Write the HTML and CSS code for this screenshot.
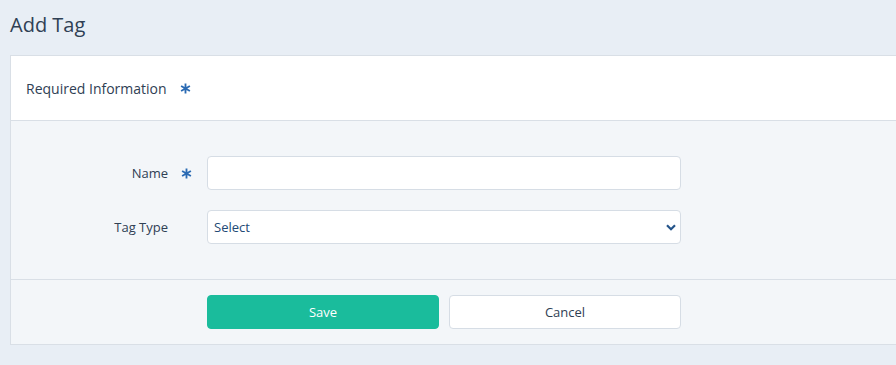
FILE: index.html
```html
<!DOCTYPE html>
<html>
<head>
	<meta charset="utf-8">
	<meta name="viewport" content="width=device-width, initial-scale=1">
	<title>Add Tag</title>
	<link rel="stylesheet" href="styles.css">
</head>
<body>

  <div class="page">
    <h1 class="page_title">Add Tag</h1>

    <div class="panel">
      <div class="panel_head">
        Required Information
        <span class="req">
          <svg width="11" height="11" viewBox="0 0 12 12"><path d="M6 0.5V11.5M1.2 3.2L10.8 8.8M10.8 3.2L1.2 8.8" stroke="currentColor" stroke-width="2"/></svg>
        </span>
      </div>

      <div class="panel_body">
        <div class="form_row">
          <label class="form_label" for="tagName">Name</label>
          <span class="req">
            <svg width="11" height="11" viewBox="0 0 12 12"><path d="M6 0.5V11.5M1.2 3.2L10.8 8.8M10.8 3.2L1.2 8.8" stroke="currentColor" stroke-width="2"/></svg>
          </span>
          <input type="text" id="tagName" class="form_input">
        </div>

        <div class="form_row">
          <label class="form_label" for="tagType">Tag Type</label>
          <span class="req"></span>
          <div class="select_wrap">
            <select id="tagType" class="form_input form_select">
              <option>Select</option>
            </select>
            <svg class="chevron" width="10" height="7" viewBox="0 0 10 7"><path d="M1 1.2L5 5.2L9 1.2" fill="none" stroke="currentColor" stroke-width="2.2"/></svg>
          </div>
        </div>
      </div>

      <div class="panel_foot">
        <button class="btn btn_save">Save</button>
        <button class="btn btn_cancel">Cancel</button>
      </div>
    </div>
  </div>

</body>
</html>
```

FILE: styles.css
```css
html, body {
  margin: 0;
  padding: 0;
}

body {
  background-color: #e8eef5;
  font-family: "Open Sans", "Liberation Sans", sans-serif;
  color: #2f3e4f;
  overflow: hidden;
}

.page {
  padding: 12px 0 0 10px;
}

.page_title {
  margin: 0 0 17px 0;
  font-size: 20px;
  font-weight: normal;
  line-height: 26px;
  color: #2f4054;
}

/* panel */
.panel {
  margin-right: -20px;
  border: 1px solid #d9dfe6;
  background-color: #f3f6f9;
}

.panel_head {
  height: 64px;
  display: flex;
  align-items: center;
  padding-left: 15px;
  font-size: 14px;
  color: #2f4054;
  background-color: #fff;
  border-bottom: 1px solid #d9dfe6;
}

.panel_head .req {
  margin-left: 13px;
}

.req {
  display: inline-flex;
  align-items: center;
  color: #2a6ab3;
  width: 11px;
}

.panel_body {
  padding: 35px 0 35px 0;
  border-bottom: 1px solid #d9dfe6;
  display: flex;
  flex-direction: column;
  gap: 20px;
}

.form_row {
  display: flex;
  align-items: center;
}

.form_label {
  width: 157px;
  text-align: right;
  font-size: 13px;
  color: #2f4054;
}

.form_row .req {
  margin-left: 13px;
  margin-right: 15px;
}

.form_input {
  box-sizing: border-box;
  width: 474px;
  height: 34px;
  border: 1px solid #d6dde5;
  border-radius: 4px;
  background-color: #fff;
  font-family: "Open Sans", "Liberation Sans", sans-serif;
  font-size: 13px;
  padding: 0 6px;
  margin: 0;
  outline: none;
}

.select_wrap {
  position: relative;
}

.form_select {
  -webkit-appearance: none;
  appearance: none;
  color: #234a75;
  display: block;
}

.chevron {
  position: absolute;
  right: 5px;
  top: 14px;
  color: #24548a;
}

.panel_foot {
  padding: 15px 0 15px 196px;
  display: flex;
  gap: 10px;
}

.btn {
  box-sizing: border-box;
  width: 232px;
  height: 34px;
  border-radius: 4px;
  font-family: "Open Sans", "Liberation Sans", sans-serif;
  font-size: 13px;
  cursor: pointer;
}

.btn_save {
  background-color: #1abc9c;
  border: 1px solid #1abc9c;
  color: #fff;
}

.btn_cancel {
  background-color: #fff;
  border: 1px solid #d6dde5;
  color: #2f4054;
}
```
